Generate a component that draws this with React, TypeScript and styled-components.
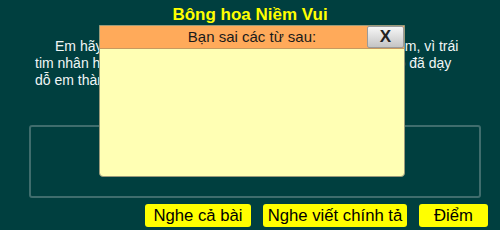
import React from 'react';
import styled, { createGlobalStyle } from 'styled-components';

const GlobalStyle = createGlobalStyle`
	html, body {
		margin: 0;
		padding: 0;
		background: #003f3f;
	}
	body {
		font-family: 'Liberation Sans', Arial, sans-serif;
	}
`;

const Page = styled.div`
	position: relative;
	width: 500px;
	height: 230px;
	overflow: hidden;
	background: #003f3f;
`;

const Title = styled.h1`
	margin: 0;
	padding-top: 5px;
	font-size: 17px;
	line-height: 20px;
	font-weight: bold;
	color: #ffff00;
	text-align: center;
`;

const Lesson = styled.p`
	margin: 13px 0 0 35px;
	width: 434px;
	font-size: 14px;
	line-height: 17px;
	color: #f0f6f6;
	text-indent: 20px;
	white-space: nowrap;
`;

const AnswerBox = styled.div`
	margin: 36px 0 0 29px;
	width: 448px;
	height: 69px;
	border: 2px solid #3f6d6d;
	border-radius: 3px;
`;

const Toolbar = styled.div`
	display: flex;
	justify-content: flex-end;
	gap: 12px;
	margin-top: 6px;
	padding-right: 12px;
`;

const Action = styled.button<{ $w: number }>`
	width: ${p => p.$w}px;
	height: 23px;
	padding: 0;
	border: none;
	border-radius: 3px;
	background: #ffff00;
	color: #000;
	font-family: 'Liberation Sans', Arial, sans-serif;
	font-size: 16.7px;
	line-height: 23px;
	text-align: center;
	white-space: nowrap;
	cursor: pointer;
`;

const Dialog = styled.div`
	position: absolute;
	left: 99px;
	top: 25px;
	width: 304px;
	height: 150px;
	display: flex;
	flex-direction: column;
	border: 1px solid #9a9a7a;
	border-radius: 0 0 4px 4px;
	background: #ffffb4;
	overflow: hidden;
`;

const DialogHead = styled.div`
	position: relative;
	height: 22px;
	background: #ffaa5a;
	border-bottom: 1px solid #c89a60;
	color: #1a1a1a;
	font-size: 15px;
	line-height: 22px;
	text-align: center;
`;

const Close = styled.button`
	position: absolute;
	right: 0;
	top: 0;
	width: 37px;
	height: 22px;
	padding: 0;
	border: 1px solid #9a9a9a;
	border-radius: 2px;
	background: linear-gradient(#f6f6f6, #c4c4c4);
	color: #222;
	font-family: 'Liberation Sans', Arial, sans-serif;
	font-size: 17px;
	font-weight: bold;
	line-height: 20px;
	cursor: pointer;
`;

const DialogBody = styled.div`
	flex: 1;
`;

export default function App() {
	return (
		<Page>
			<GlobalStyle />
			<Title>Bông hoa Niềm Vui</Title>
			<Lesson>
				Em hãy viết lời cảm ơn gửi tới các thầy cô giáo cũ của em, vì trái
				<br />
				tim nhân hậu và tấm lòng bao dung, với sự tận tâm, thầy cô đã dạy
				<br />
				dỗ em thành người tốt.
			</Lesson>
			<AnswerBox />
			<Toolbar>
				<Action $w={106}>Nghe cả bài</Action>
				<Action $w={144}>Nghe viết chính tả</Action>
				<Action $w={69}>Điểm</Action>
			</Toolbar>
			<Dialog>
				<DialogHead>
					Bạn sai các từ sau:
					<Close>X</Close>
				</DialogHead>
				<DialogBody />
			</Dialog>
		</Page>
	);
}
